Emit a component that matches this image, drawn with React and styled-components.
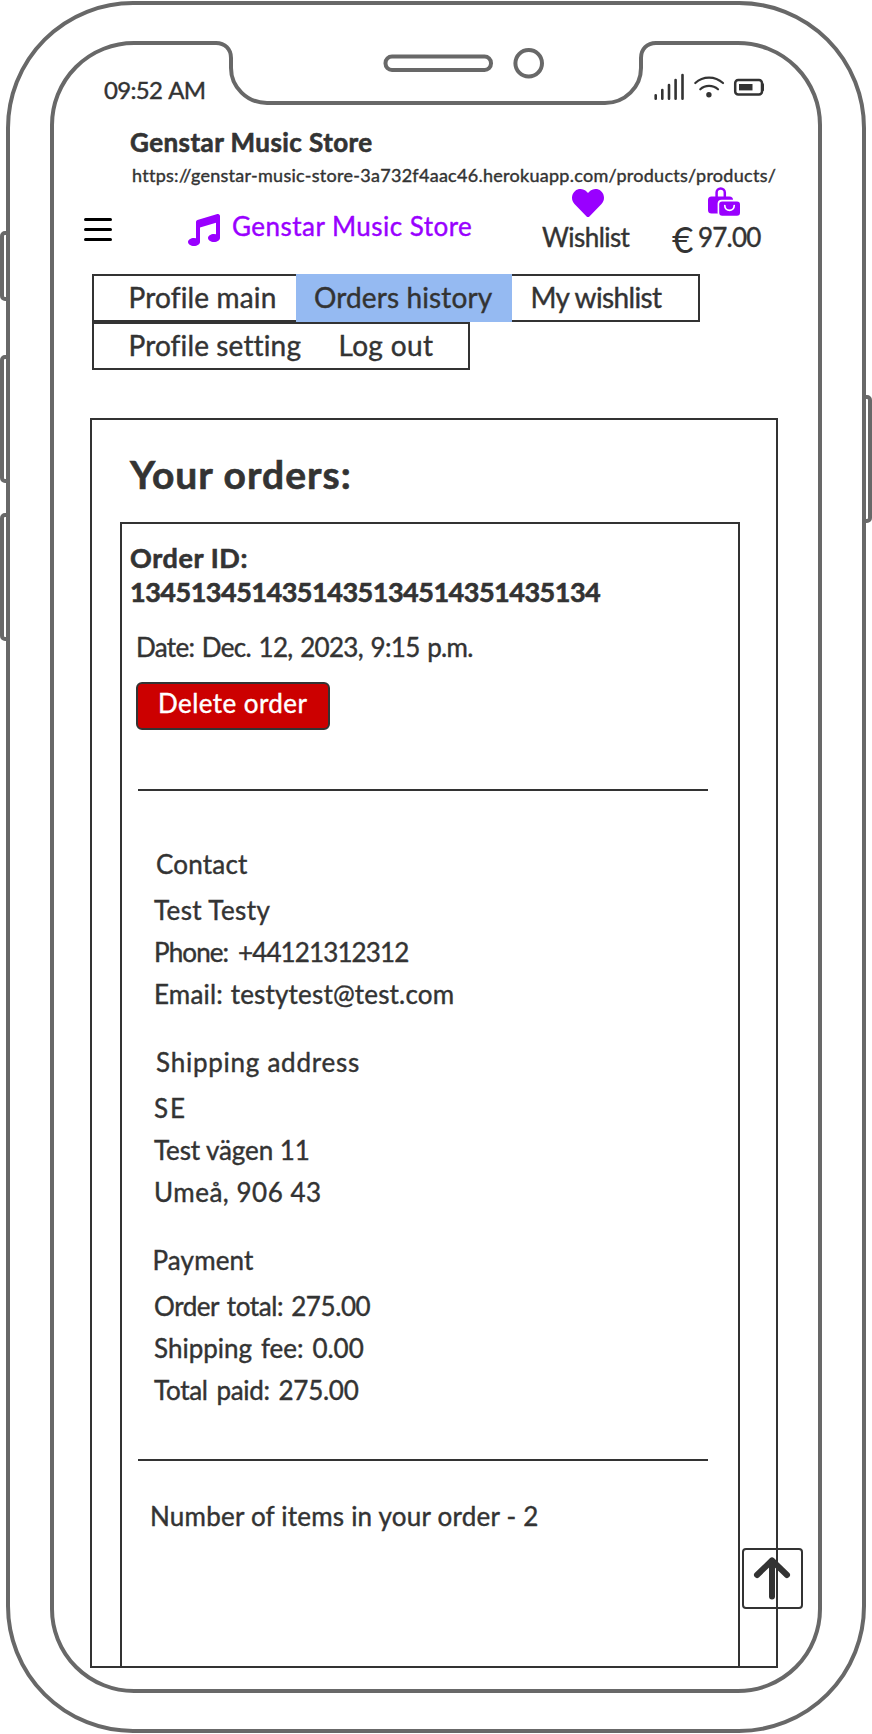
import React from "react";
import styled, { createGlobalStyle } from "styled-components";
import { FaHeart, FaMusic } from "react-icons/fa";

const INK = "#333333";
const BEZEL = "#686868";
const PURPLE = "#9900ff";

const GlobalStyle = createGlobalStyle`
  *, *::before, *::after { box-sizing: border-box; }
  html, body { margin: 0; background: #fff; }
  body { font-family: Lato, "Liberation Sans", sans-serif; color: ${INK}; }
`;

/* ---------- device ---------- */

const Stage = styled.main`
  position: relative;
  width: 872px;
  height: 1734px;
  padding: 1px 6px;
  overflow: hidden;
  background: #fff;
`;

const Device = styled.div`
  position: relative;
  height: 1732px;
  padding: 36px 40px;
  border: 4px solid ${BEZEL};
  border-radius: 127px;
  background: #fff;
`;

const Screen = styled.div`
  position: relative;
  display: flex;
  flex-direction: column;
  height: 1652px;
  border: 4px solid ${BEZEL};
  border-radius: 84px;
`;

const SideKey = styled.div`
  position: absolute;
  top: ${(p) => p.$top}px;
  ${(p) => p.$side}: 0;
  width: 10px;
  height: ${(p) => p.$height}px;
  border: 4px solid ${BEZEL};
  border-radius: ${(p) => (p.$side === "left" ? "5px 0 0 5px" : "0 5px 5px 0")};
`;

const NotchArt = styled.svg`
  position: absolute;
  left: 152px;
  top: -8px;
  width: 460px;
  height: 72px;
`;

/* ---------- text ---------- */

const Text = styled.span`
  display: block;
  font-size: ${(p) => p.$size || 26}px;
  line-height: ${(p) => p.$line || 42}px;
  font-weight: ${(p) => (p.$bold ? 700 : 400)};
  letter-spacing: ${(p) => p.$track || 0}px;
  word-spacing: ${(p) => p.$word || 0}px;
  color: ${(p) => p.$color || "inherit"};
  -webkit-text-stroke: ${(p) => (p.$bold ? 0.6 : 0.4)}px currentColor;
  font-variant-ligatures: none;
  white-space: nowrap;
`;

/* ---------- status and address ---------- */

const StatusBar = styled.div`
  display: flex;
  justify-content: space-between;
  height: 75px;
  padding: 30px 53px 0 50px;
`;

const StatusIcons = styled.svg`
  width: 112px;
  height: 30px;
  margin-top: -3px;
`;

const Address = styled.div`
  display: flex;
  flex-direction: column;
  gap: 5px;
  height: 67px;
  padding: 6px 0 0 76px;
`;

const Url = styled.div`
  padding-left: 2px;
`;

/* ---------- header ---------- */

const Header = styled.header`
  display: grid;
  grid-template-columns: 104px 44px 310px 130px 1fr;
  align-items: start;
  height: 87px;
  padding-left: 30px;
`;

const Burger = styled.div`
  display: flex;
  flex-direction: column;
  gap: 7px;
  width: 28px;
  margin-top: 31px;
`;

const BurgerLine = styled.span`
  height: 3px;
  border-radius: 2px;
  background: #000;
`;

const NoteIcon = styled(FaMusic)`
  width: 32px;
  height: 32px;
  margin-top: 27px;
  color: ${PURPLE};
`;

const Brand = styled.div`
  padding-top: 23px;
`;

const HeaderLink = styled.div`
  display: flex;
  flex-direction: column;
`;

const LinkIcon = styled.div`
  height: 34px;
  padding-left: ${(p) => p.$indent}px;
  color: ${PURPLE};
  svg { display: block; }
`;

const Amount = styled.div`
  display: flex;
  align-items: flex-start;
  height: 40px;
  gap: 5px;
`;

const Currency = styled.span`
  width: 21px;
  font-size: 37px;
  line-height: 36px;
`;

/* ---------- tabs ---------- */

const Tabs = styled.nav`
  padding-left: 38px;
`;

const TabRow = styled.div`
  display: flex;
  width: ${(p) => p.$width}px;
  height: 48px;
  border: 2px solid ${INK};
`;

const Tab = styled.div`
  flex: none;
  width: ${(p) => p.$width}px;
  height: 48px;
  margin-top: -2px;
  padding: 3px 0 0 ${(p) => p.$indent}px;
  background: ${(p) => (p.$active ? "#95baf2" : "none")};
`;

/* ---------- orders ---------- */

const OrdersPanel = styled.section`
  display: flex;
  flex-direction: column;
  width: 688px;
  height: 1250px;
  margin: 48px 0 0 36px;
  padding: 30px 36px 0 28px;
  border: 2px solid ${INK};
`;

const PanelTitle = styled.div`
  padding-left: 10px;
`;

const OrderCard = styled.article`
  flex: 1;
  margin-top: 24px;
  padding-top: 17px;
  border: 2px solid ${INK};
  border-bottom: 0;
`;

const OrderId = styled.div`
  padding-left: 8px;
`;

const OrderDate = styled.div`
  margin: 23px 0 20px 14px;
`;

const DeleteButton = styled.button`
  display: block;
  width: 194px;
  height: 48px;
  margin-left: 14px;
  padding: 0 0 6px 20px;
  border: 2px solid ${INK};
  border-radius: 6px;
  background: #cc0000;
  font-family: inherit;
  text-align: left;
`;

const Divider = styled.hr`
  width: 570px;
  height: 2px;
  margin: ${(p) => p.$before}px 0 ${(p) => p.$after}px 16px;
  border: 0;
  background: ${INK};
`;

const Group = styled.section`
  height: 198px;
  padding-left: 32px;
`;

const GroupTitle = styled.div`
  margin: 0 0 4px ${(p) => p.$nudge}px;
`;

const ItemCount = styled.div`
  padding-left: 28px;
`;

const ScrollTop = styled.div`
  position: absolute;
  left: 688px;
  top: 1503px;
  width: 61px;
  height: 61px;
  border: 2px solid ${INK};
  border-radius: 4px;
`;

/* ---------- drawings ---------- */

function Notch() {
  return (
    <NotchArt viewBox="206 37 460 72" fill="none" stroke={BEZEL} strokeWidth="4">
      <rect x="215" y="39" width="445" height="8" fill="#fff" stroke="none" />
      <path d="M213 43H216C225 43 231 49 231 58V68C231 87 247 103 267 103H605C625 103 641 87 641 68V58C641 49 647 43 656 43H662" />
      <rect x="385.5" y="56.5" width="105.5" height="13.5" rx="6.5" />
      <circle cx="528.7" cy="63.3" r="13.3" />
    </NotchArt>
  );
}

function Status() {
  return (
    <StatusIcons viewBox="653 72 112 30" fill="none" stroke={INK} strokeLinecap="round">
      <path d="M655.7 95.3V98.7M662.3 90V98.7M669 85V98.7M675.6 80V98.7M682.5 75V98.7" strokeWidth="2.6" />
      <path d="M695.3 83C703 75.8 715 75.8 723 83M700.3 89.3C705 84.8 713 84.8 718 89.3" strokeWidth="2.2" />
      <circle cx="708.9" cy="94.8" r="2.7" fill={INK} stroke="none" />
      <rect x="735.2" y="80" width="26.8" height="14.4" rx="3" strokeWidth="2.5" />
      <rect x="739" y="84" width="13.5" height="6.4" fill={INK} stroke="none" />
      <path d="M762.8 84.5V90" strokeWidth="2.4" />
    </StatusIcons>
  );
}

function Bags() {
  return (
    <svg width="32" height="29" viewBox="0 0 32 29" fill="none">
      <path d="M8.6 11V5.6a4.1 4.1 0 0 1 8.2 0V11" stroke="currentColor" strokeWidth="2.5" />
      <rect x="0" y="9.6" width="25" height="17" rx="3.5" fill="currentColor" />
      <rect x="9.6" y="12.8" width="24" height="17" rx="4" fill="#fff" />
      <rect x="11.2" y="14.4" width="20.8" height="14.3" rx="3" fill="currentColor" />
      <path d="M16.8 18.5c0 6.6 9.4 6.6 9.4 0" stroke="#fff" strokeWidth="1.7" strokeLinecap="round" />
    </svg>
  );
}

function UpArrow() {
  return (
    <svg width="57" height="57" viewBox="744 1550 57 57" fill="none" stroke={INK} strokeWidth="6" strokeLinecap="round" strokeLinejoin="round">
      <path d="M772 1596.5V1560.5M757 1575L772 1560.5L787 1575" />
    </svg>
  );
}

/* ---------- data ---------- */

const GROUPS = [
  {
    title: "Contact", track: 0.2, nudge: 2,
    lines: [["Test Testy", 0.4], ["Phone: +44121312312", -0.88, 4], ["Email: testytest@test.com", 0.18, 1]],
  },
  {
    title: "Shipping address", track: 0.75, nudge: 2,
    lines: [["SE", 2], ["Test vägen 11", -0.1], ["Umeå, 906 43", 0.52]],
  },
  {
    title: "Payment", track: 0.14, nudge: -1.5,
    lines: [["Order total: 275.00", -0.42, 2], ["Shipping fee: 0.00", 0, 2.2], ["Total paid: 275.00", -0.27, 2.3]],
  },
];

export default function App() {
  return (
    <Stage>
      <GlobalStyle />
      <SideKey $side="left" $top={231} $height={70} />
      <SideKey $side="left" $top={355} $height={128} />
      <SideKey $side="left" $top={513} $height={128} />
      <SideKey $side="right" $top={395} $height={128} />
      <Device>
        <Screen>
          <Notch />
          <StatusBar>
            <Text $size={24} $line={30} $track={-0.72} $word={1.5}>09:52 AM</Text>
            <Status />
          </StatusBar>
          <Address>
            <Text $bold $line={32} $track={0.44}>Genstar Music Store</Text>
            <Url>
              <Text $size={18} $line={24} $track={0.28}>
                https://genstar-music-store-3a732f4aac46.herokuapp.com/products/products/
              </Text>
            </Url>
          </Address>
          <Header>
            <Burger>
              <BurgerLine />
              <BurgerLine />
              <BurgerLine />
            </Burger>
            <NoteIcon />
            <Brand>
              <Text $line={32} $track={0.47} $color={PURPLE}>Genstar Music Store</Text>
            </Brand>
            <HeaderLink>
              <LinkIcon $indent={30}><FaHeart size={32} /></LinkIcon>
              <Text $line={32} $track={-0.55}>Wishlist</Text>
            </HeaderLink>
            <HeaderLink>
              <LinkIcon $indent={36}><Bags /></LinkIcon>
              <Amount>
                <Currency>€</Currency>
                <Text $line={32} $track={-0.77}>97.00</Text>
              </Amount>
            </HeaderLink>
          </Header>
          <Tabs>
            <TabRow $width={608}>
              <Tab $width={202} $indent={34.5}><Text $size={28} $line={40} $track={0.15}>Profile main</Text></Tab>
              <Tab $width={216} $indent={18} $active><Text $size={28} $line={40} $track={0.12}>Orders history</Text></Tab>
              <Tab $width={180} $indent={18.5}><Text $size={28} $line={40} $track={-0.65}>My wishlist</Text></Tab>
            </TabRow>
            <TabRow $width={378}>
              <Tab $width={244} $indent={34.5}><Text $size={28} $line={40} $track={0.13}>Profile setting</Text></Tab>
              <Tab $width={130} $indent={0.5}><Text $size={28} $line={40} $track={0.35}>Log out</Text></Tab>
            </TabRow>
          </Tabs>
          <OrdersPanel>
            <PanelTitle>
              <Text $bold $size={39} $line={48} $track={1.02}>Your orders:</Text>
            </PanelTitle>
            <OrderCard>
              <OrderId>
                <Text $bold $size={27} $line={34} $track={0.6}>Order ID:</Text>
                <Text $bold $size={27} $line={34} $track={-0.49}>1345134514351435134514351435134</Text>
              </OrderId>
              <OrderDate>
                <Text $line={30} $track={-0.68} $word={1.6}>Date: Dec. 12, 2023, 9:15 p.m.</Text>
              </OrderDate>
              <DeleteButton>
                <Text $line={36} $track={0.43} $color="#fff">Delete order</Text>
              </DeleteButton>
              <Divider $before={59} $after={52} />
              {GROUPS.map((g) => (
                <Group key={g.title}>
                  <GroupTitle $nudge={g.nudge}><Text $track={g.track}>{g.title}</Text></GroupTitle>
                  {g.lines.map(([line, track, word]) => (
                    <Text key={line} $track={track} $word={word}>{line}</Text>
                  ))}
                </Group>
              ))}
              <Divider $before={22} $after={34} />
              <ItemCount>
                <Text $track={0.22}>Number of items in your order - 2</Text>
              </ItemCount>
            </OrderCard>
          </OrdersPanel>
          <ScrollTop><UpArrow /></ScrollTop>
        </Screen>
      </Device>
    </Stage>
  );
}
